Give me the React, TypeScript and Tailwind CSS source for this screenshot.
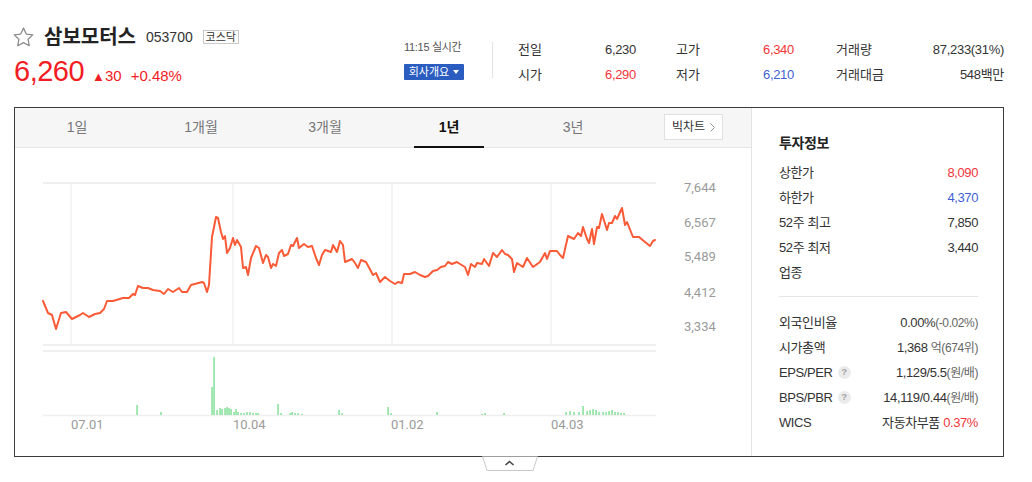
import React from "react";

const priceLine: [number, number][] = [
  [43, 301], [48, 313], [52, 315], [56, 329], [61, 313], [66, 312], [72, 319], [80, 315], [83, 313],
  [89, 317], [95, 314], [100, 313], [104, 309], [107, 301], [113, 301], [123, 298], [129, 298],
  [133, 294], [135, 295], [138, 286], [143, 288], [148, 288], [153, 290], [160, 291], [164, 294],
  [168, 289], [173, 292], [179, 288], [182, 292], [187, 292], [191, 285], [202, 282], [204, 283],
  [207, 292], [209, 285], [212, 237], [216, 217], [218, 218], [221, 232], [223, 239], [225, 236],
  [227, 253], [230, 248], [233, 238], [235, 245], [237, 240], [241, 247], [243, 268], [246, 267],
  [248, 275], [251, 258], [256, 246], [259, 248], [263, 263], [266, 255], [268, 257], [271, 268],
  [273, 264], [276, 266], [279, 253], [282, 250], [284, 256], [288, 254], [291, 245], [293, 246],
  [297, 238], [299, 248], [304, 244], [308, 247], [312, 246], [316, 258], [319, 265], [322, 255],
  [325, 250], [331, 252], [333, 245], [337, 252], [340, 241], [343, 245], [345, 262], [352, 259],
  [355, 263], [358, 268], [361, 260], [366, 262], [373, 275], [376, 273], [380, 282], [385, 277],
  [390, 281], [395, 284], [398, 282], [402, 283], [404, 274], [410, 274], [415, 272], [420, 275],
  [425, 277], [428, 276], [433, 271], [437, 270], [441, 267], [445, 266], [448, 262], [452, 264],
  [457, 262], [460, 264], [465, 267], [468, 275], [471, 264], [475, 267], [477, 263], [482, 264],
  [484, 259], [489, 266], [493, 253], [497, 257], [502, 250], [505, 254], [508, 255], [512, 259],
  [514, 272], [517, 263], [523, 267], [527, 258], [533, 267], [540, 262], [545, 253], [547, 259],
  [550, 251], [557, 251], [560, 255], [563, 258], [568, 236], [574, 239], [578, 233], [581, 236],
  [583, 227], [587, 239], [589, 243], [592, 229], [594, 244], [597, 227], [599, 228], [602, 214],
  [607, 230], [609, 223], [612, 223], [615, 216], [617, 219], [622, 208], [625, 225], [627, 222],
  [633, 237], [639, 237], [645, 242], [650, 246], [653, 241], [655, 240],
];

const volumeBars: [number, number][] = [
  [137, 405], [161, 412], [212, 387], [214, 357], [217, 410], [220, 408], [222, 409], [225, 408],
  [227, 407], [229, 408], [231, 409], [234, 412], [236, 409], [238, 412], [241, 413], [244, 413],
  [247, 412], [250, 412], [253, 413], [256, 413], [258, 413], [278, 404], [281, 413], [290, 413],
  [292, 412], [295, 413], [298, 413], [302, 414], [339, 410], [342, 413], [388, 407], [391, 413],
  [437, 412], [482, 414], [485, 413], [504, 413], [566, 412], [570, 411], [574, 412], [579, 412],
  [583, 406], [587, 411], [590, 410], [593, 409], [596, 410], [599, 412], [603, 412], [606, 412],
  [609, 411], [612, 410], [615, 412], [618, 412], [621, 413], [624, 413],
];

const tabs = ["1일", "1개월", "3개월", "1년", "3년"];

function StarIcon() {
  return (
    <svg width="23" height="23" viewBox="0 0 24 24" fill="none" stroke="#8a8a8a" strokeWidth="1.3" strokeLinejoin="round">
      <path d="M12 2.2l2.95 6.2 6.75.85-4.95 4.65 1.3 6.7L12 17.3l-6.05 3.3 1.3-6.7L2.3 9.25l6.75-.85z" />
    </svg>
  );
}

function HelpBadge() {
  return (
    <span className="ml-[5px] inline-flex h-[13px] w-[13px] items-center justify-center rounded-full bg-[#ebebeb] text-[9px] font-bold leading-none text-[#a0a0a0]">
      ?
    </span>
  );
}

function QuoteCell({ label, value, color = "text-[#333]", width }: { label: string; value: React.ReactNode; color?: string; width: string }) {
  return (
    <div className={`flex h-[25px] items-center justify-between ${width}`}>
      <span className="text-[13px] text-[#333]">{label}</span>
      <span className={`text-[13px] tracking-[-0.3px] ${color}`}>{value}</span>
    </div>
  );
}

function InfoRow({ label, children }: { label: React.ReactNode; children: React.ReactNode }) {
  return (
    <div className="flex h-[25px] items-center justify-between text-[13px] text-[#333]">
      <div className="flex items-center tracking-[-0.4px]">{label}</div>
      <div className="tracking-[-0.4px]">{children}</div>
    </div>
  );
}

function Chart() {
  const pts = priceLine.map(([x, y]) => `${x},${y}`).join(" ");
  return (
    <svg width="736" height="308" viewBox="15 148 736 308" className="block">
      {/* grid */}
      <line x1="43" y1="183" x2="656" y2="183" stroke="#efefef" strokeWidth="2" />
      <line x1="43" y1="345" x2="656" y2="345" stroke="#efefef" strokeWidth="2" />
      {[71, 233, 392, 551].map((x) => (
        <line key={x} x1={x} y1="183" x2={x} y2="345" stroke="#f1f1f1" strokeWidth="1.5" />
      ))}
      <line x1="43" y1="351" x2="656" y2="351" stroke="#efefef" strokeWidth="2" />
      <line x1="43" y1="415.5" x2="656" y2="415.5" stroke="#efefef" strokeWidth="1.5" />
      {/* volume */}
      {volumeBars.map(([x, y]) => (
        <rect key={x} x={x - 0.6} y={y} width="1.3" height={415 - y} fill="#72dc8c" />
      ))}
      {/* price */}
      <polyline points={pts} fill="none" stroke="#fb5a37" strokeWidth="2" strokeLinejoin="round" strokeLinecap="round" />
      {/* axis labels */}
      <g fontFamily="Roboto, 'Liberation Sans', sans-serif" fontSize="13" fill="#9a9a9a">
        {[
          ["7,644", 187],
          ["6,567", 222],
          ["5,489", 256],
          ["4,412", 292],
          ["3,334", 326],
        ].map(([t, y]) => (
          <text key={t as string} x="684" y={(y as number) + 4.5}>
            {t}
          </text>
        ))}
        {[
          ["07.01", 71],
          ["10.04", 233],
          ["01.02", 391],
          ["04.03", 551],
        ].map(([t, x]) => (
          <text key={t as string} x={x as number} y="428.5">
            {t}
          </text>
        ))}
      </g>
    </svg>
  );
}

export default function App() {
  return (
    <div className="relative h-[482px] w-[1032px] overflow-hidden bg-white font-[Liberation_Sans,Noto_Sans_CJK_KR,sans-serif] text-[#333]">
      {/* header */}
      <div className="flex h-[107px] items-start pl-[12px] pt-[24px]">
        <div className="flex w-[392px] flex-col">
          <div className="flex h-[26px] items-center">
            <StarIcon />
            <span className="ml-[9px] text-[20px] font-bold text-[#222]">삼보모터스</span>
            <span className="ml-[10px] text-[14px] text-[#333]">053700</span>
            <span className="ml-[10px] flex h-[14px] w-[36px] items-center justify-center border border-[#c8c8c8] text-[11px] leading-none text-[#333]">
              코스닥
            </span>
          </div>
          <div className="mt-[5px] flex h-[32px] items-baseline pl-[2px] text-[#f21c24]">
            <span className="text-[29px] leading-[32px] tracking-[-0.5px]">6,260</span>
            <span className="ml-[8px] text-[13px]">▲</span>
            <span className="text-[15px]">30</span>
            <span className="ml-[9px] text-[15px]">+0.48%</span>
          </div>
        </div>
        <div className="flex w-[60px] flex-col items-start pt-[16px]">
          <span className="text-[11px] leading-[14px] tracking-[-0.3px] text-[#555]">11:15 실시간</span>
          <button className="mt-[10px] flex h-[16px] w-[60px] items-center justify-center gap-[4px] rounded-[1px] bg-[#2b5cc0] text-[11px] leading-none text-white">
            회사개요
            <svg width="6" height="4" viewBox="0 0 6 4">
              <path d="M0 0h6L3 4z" fill="#fff" />
            </svg>
          </button>
        </div>
        <div className="ml-[28px] mt-[18px] h-[36px] border-l border-[#e2e2e2]" />
        <div className="ml-[25px] mt-[13px] flex">
          <div className="flex flex-col">
            <QuoteCell label="전일" value="6,230" width="w-[118px]" />
            <QuoteCell label="시가" value="6,290" color="text-[#f3343a]" width="w-[118px]" />
          </div>
          <div className="ml-[40px] flex flex-col">
            <QuoteCell label="고가" value="6,340" color="text-[#f3343a]" width="w-[118px]" />
            <QuoteCell label="저가" value="6,210" color="text-[#3f5fd4]" width="w-[118px]" />
          </div>
          <div className="ml-[42px] flex flex-col">
            <QuoteCell label="거래량" value="87,233(31%)" width="w-[168px]" />
            <QuoteCell label="거래대금" value="548백만" width="w-[168px]" />
          </div>
        </div>
      </div>

      {/* main box */}
      <div className="ml-[14px] flex h-[350px] w-[990px] border border-[#3c3c3c]">
        <div className="flex w-[736px] flex-col">
          <div className="flex h-[40px] items-stretch border-b border-[#e6e6e6] bg-[#f6f6f6]">
            {tabs.map((t) => (
              <div key={t} className="relative flex w-[124px] items-center justify-center">
                <span className={t === "1년" ? "text-[14px] font-bold text-[#111]" : "text-[14px] text-[#777]"}>{t}</span>
                {t === "1년" && <span className="absolute bottom-[-1px] h-[2px] w-[70px] bg-[#111]" />}
              </div>
            ))}
            <div className="ml-[29px] mt-[6px] flex h-[26px] w-[59px] items-center justify-center gap-[5px] border border-[#e0e0e0] bg-white text-[12px] text-[#333]">
              빅차트
              <svg width="5" height="9" viewBox="0 0 5 9">
                <path d="M0.5 0.5l4 4-4 4" fill="none" stroke="#999" strokeWidth="1" />
              </svg>
            </div>
          </div>
          <Chart />
        </div>
        <div className="flex-1 border-l border-[#e3e3e3] pl-[27px] pr-[25px] pt-[23px]">
          <div className="h-[24px] text-[14px] font-bold leading-[24px] tracking-[-0.4px] text-[#222]">투자정보</div>
          <div className="mt-[5px]">
            <InfoRow label="상한가">
              <span className="text-[#f3343a]">8,090</span>
            </InfoRow>
            <InfoRow label="하한가">
              <span className="text-[#3f5fd4]">4,370</span>
            </InfoRow>
            <InfoRow label="52주 최고">7,850</InfoRow>
            <InfoRow label="52주 최저">3,440</InfoRow>
            <InfoRow label="업종">{""}</InfoRow>
          </div>
          <div className="mt-[11px] h-px bg-[#e5e5e5]" />
          <div className="mt-[13px]">
            <InfoRow label="외국인비율">
              0.00%<span className="text-[12px] text-[#666]">(-0.02%)</span>
            </InfoRow>
            <InfoRow label="시가총액">
              1,368 <span className="text-[12px] text-[#666]">억(674위)</span>
            </InfoRow>
            <InfoRow
              label={
                <>
                  EPS/PER
                  <HelpBadge />
                </>
              }
            >
              1,129/5.5<span className="text-[12px] text-[#666]">(원/배)</span>
            </InfoRow>
            <InfoRow
              label={
                <>
                  BPS/PBR
                  <HelpBadge />
                </>
              }
            >
              14,119/0.44<span className="text-[12px] text-[#666]">(원/배)</span>
            </InfoRow>
            <InfoRow label="WICS">
              자동차부품 <span className="text-[#f3343a]">0.37%</span>
            </InfoRow>
          </div>
        </div>
      </div>

      {/* collapse handle */}
      <div className="ml-[482px] mt-[-1px] w-[56px]">
        <svg width="56" height="15" viewBox="0 0 56 15" className="block">
          <path d="M0.5 0.5 L5 14.5 H51 L55.5 0.5" fill="#fff" stroke="#c9c9c9" strokeWidth="1" />
          <path d="M23.5 9 L27.5 5.5 L31.5 9" fill="none" stroke="#444" strokeWidth="1.6" />
        </svg>
      </div>
    </div>
  );
}
